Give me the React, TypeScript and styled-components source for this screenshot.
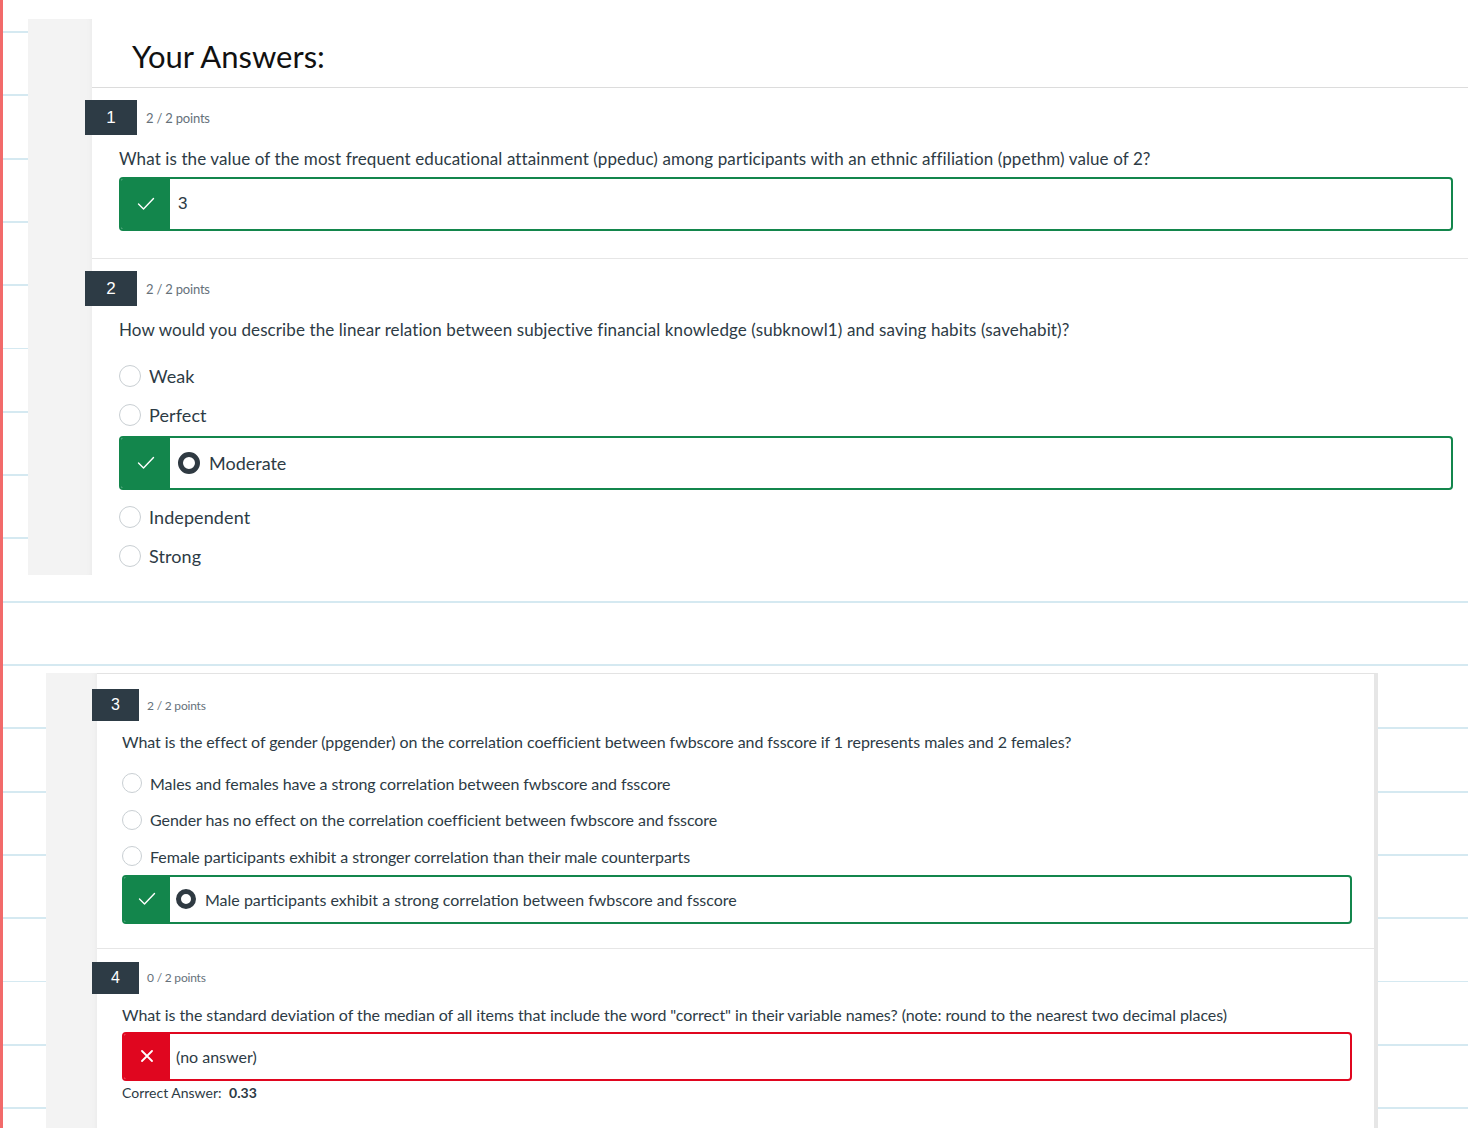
import React from "react";
import styled, { createGlobalStyle, css, ThemeProvider } from "styled-components";

interface Dims {
  sideW: number;
  padL: number;
  padR: number;
  secTop: number;
  secBottom: number;
  badgeW: number;
  badgeH: number;
  badgeShift: number;
  badgeFont: number;
  pointsFont: number;
  pointsGap: number;
  questionFont: number;
  questionLh: number;
  questionTop: number;
  questionTrack: number;
  boxTop: number;
  boxH: number;
  statusW: number;
  boxFont: number;
  innerGap: number;
  optionsTop: number;
  optionFont: number;
  optionRow: number;
  radio: number;
  radioGap: number;
  ring: number;
  pickedMargin: string;
}

declare module "styled-components" {
  export interface DefaultTheme extends Dims {}
}

// first screenshot is a bit larger than the second one
const large: Dims = {
  sideW: 64,
  padL: 27,
  padR: 15,
  secTop: 12,
  secBottom: 27,
  badgeW: 52,
  badgeH: 35,
  badgeShift: 34,
  badgeFont: 17,
  pointsFont: 13,
  pointsGap: 9,
  questionFont: 17,
  questionLh: 24,
  questionTop: 12,
  questionTrack: 0.1,
  boxTop: 6,
  boxH: 54,
  statusW: 51,
  boxFont: 17,
  innerGap: 8,
  optionsTop: 14,
  optionFont: 18,
  optionRow: 39,
  radio: 22,
  radioGap: 8,
  ring: 5,
  pickedMargin: "2px 0 7px",
};

const compact: Dims = {
  sideW: 51,
  padL: 25,
  padR: 22,
  secTop: 13,
  secBottom: 24,
  badgeW: 47,
  badgeH: 32,
  badgeShift: 30,
  badgeFont: 16,
  pointsFont: 12,
  pointsGap: 8,
  questionFont: 16,
  questionLh: 22,
  questionTop: 10,
  questionTrack: -0.07,
  boxTop: 6,
  boxH: 49,
  statusW: 48,
  boxFont: 16,
  innerGap: 6,
  optionsTop: 12,
  optionFont: 16,
  optionRow: 36.5,
  radio: 20,
  radioGap: 8,
  ring: 5,
  pickedMargin: "0",
};

const GREEN = "#13864c";
const RED = "#e0061f";
const INK = "#2d3b45";

const GlobalStyle = createGlobalStyle`
  html, body {
    margin: 0;
    padding: 0;
  }
  body {
    font-family: Lato, "Noto Sans", sans-serif;
    color: ${INK};
    background: #fff;
  }
  * {
    box-sizing: border-box;
  }
`;

const Page = styled.div`
  height: 100vh;
  overflow: hidden;
  display: flex;
  flex-direction: column;
  border-left: 3px solid #f26a6a;
  background-color: #fff;
  background-image: repeating-linear-gradient(
    to bottom,
    transparent 0px,
    transparent 31px,
    #d5e9f1 31px,
    #d5e9f1 33px,
    transparent 33px,
    transparent 63.3px
  );
`;

const Sheet = styled.div<{ $top: number; $left: number; $width?: number }>`
  display: flex;
  flex-shrink: 0;
  margin: ${(p) => p.$top}px 0 0 ${(p) => p.$left}px;
  width: ${(p) => (p.$width ? `${p.$width}px` : "auto")};
`;

const Sidebar = styled.div`
  width: ${({ theme }) => theme.sideW}px;
  flex-shrink: 0;
  background: #f3f3f3;
  box-shadow: inset -5px 0 6px -5px rgba(0, 0, 0, 0.05);
`;

const Main = styled.div<{ $framed?: boolean }>`
  flex: 1;
  min-width: 0;
  background: #fff;
  ${(p) =>
    p.$framed &&
    css`
      padding-top: 2px;
      border-top: 1px solid #e3e3e3;
      border-right: 4px solid #e6e6e6;
    `}
`;

const Header = styled.div`
  height: 69px;
  padding: 17px 0 0 40px;
  border-bottom: 1px solid #dcdcdc;
`;

const Heading = styled.h1`
  margin: 0;
  font-family: Lato, sans-serif;
  font-size: 31px;
  line-height: 40px;
  font-weight: 400;
  color: #111;
`;

const Section = styled.section<{ $last?: boolean }>`
  padding: ${({ theme }) => theme.secTop}px ${({ theme }) => theme.padR}px
    ${(p) => (p.$last ? 0 : p.theme.secBottom)}px ${({ theme }) => theme.padL}px;
  border-bottom: ${(p) => (p.$last ? "none" : "1px solid #e6e6e6")};
`;

const QuestionHead = styled.div`
  display: flex;
  align-items: center;
  height: ${({ theme }) => theme.badgeH}px;
`;

const Badge = styled.div`
  display: flex;
  align-items: center;
  justify-content: center;
  width: ${({ theme }) => theme.badgeW}px;
  height: ${({ theme }) => theme.badgeH}px;
  margin-left: -${({ theme }) => theme.badgeShift}px;
  background: ${INK};
  color: #fff;
  font-family: "Liberation Sans", Arial, sans-serif;
  font-size: ${({ theme }) => theme.badgeFont}px;
`;

const Points = styled.span`
  margin-left: ${({ theme }) => theme.pointsGap}px;
  font-size: ${({ theme }) => theme.pointsFont}px;
  letter-spacing: -0.2px;
  color: #66717a;
`;

const QuestionText = styled.p`
  margin: ${({ theme }) => theme.questionTop}px 0 0;
  font-size: ${({ theme }) => theme.questionFont}px;
  line-height: ${({ theme }) => theme.questionLh}px;
  letter-spacing: ${({ theme }) => theme.questionTrack}px;
  color: ${INK};
`;

const AnswerBox = styled.div<{ $tone: "correct" | "wrong"; $inList?: boolean }>`
  display: flex;
  align-items: stretch;
  height: ${({ theme }) => theme.boxH}px;
  margin: ${(p) => (p.$inList ? p.theme.pickedMargin : `${p.theme.boxTop}px 0 0`)};
  border: 2px solid ${(p) => (p.$tone === "correct" ? GREEN : RED)};
  border-radius: 4px;
  overflow: hidden;
  background: #fff;
`;

const Status = styled.div<{ $tone: "correct" | "wrong" }>`
  display: flex;
  align-items: center;
  justify-content: center;
  width: ${({ theme }) => theme.statusW - 2}px;
  flex-shrink: 0;
  background: ${(p) => (p.$tone === "correct" ? GREEN : RED)};
`;

const AnswerValue = styled.div<{ $plain?: boolean }>`
  display: flex;
  align-items: center;
  gap: ${({ theme }) => theme.radioGap + 1}px;
  padding-left: ${({ theme }) => theme.innerGap}px;
  font-family: ${(p) => (p.$plain ? '"Liberation Sans", Arial, sans-serif' : "Lato, sans-serif")};
  font-size: ${(p) => (p.$plain ? p.theme.boxFont : p.theme.optionFont)}px;
  color: ${INK};
`;

const Options = styled.div`
  margin-top: ${({ theme }) => theme.optionsTop}px;
`;

const OptionRow = styled.div`
  display: flex;
  align-items: center;
  gap: ${({ theme }) => theme.radioGap}px;
  height: ${({ theme }) => theme.optionRow}px;
  font-size: ${({ theme }) => theme.optionFont}px;
  letter-spacing: ${({ theme }) => theme.questionTrack}px;
  color: ${INK};
`;

const Radio = styled.span<{ $picked?: boolean }>`
  display: inline-block;
  flex-shrink: 0;
  width: ${({ theme }) => theme.radio}px;
  height: ${({ theme }) => theme.radio}px;
  border-radius: 50%;
  background: #fff;
  border: ${(p) => (p.$picked ? `${p.theme.ring}px solid #2f3a42` : "1px solid #c9cfd3")};
`;

const CorrectLine = styled.div`
  margin-top: 2px;
  padding-bottom: 40px;
  font-size: 14px;
  line-height: 20px;
  color: ${INK};

  strong {
    margin-left: 4px;
    font-weight: 700;
  }
`;

const CheckIcon = () => (
  <svg width="18" height="14" viewBox="0 0 18 14" fill="none">
    <polyline points="1.5,7 6.5,12 16.5,1.5" stroke="#fff" strokeWidth="1.4" strokeLinecap="round" strokeLinejoin="round" />
  </svg>
);

const CrossIcon = () => (
  <svg width="12" height="12" viewBox="0 0 12 12" fill="none">
    <path d="M1 1 L11 11 M11 1 L1 11" stroke="#fff" strokeWidth="1.8" strokeLinecap="round" />
  </svg>
);

interface QuestionProps {
  num: number;
  points: string;
  text: string;
  last?: boolean;
  children?: React.ReactNode;
}

const Question = ({ num, points, text, last, children }: QuestionProps) => (
  <Section $last={last}>
    <QuestionHead>
      <Badge>{num}</Badge>
      <Points>{points}</Points>
    </QuestionHead>
    <QuestionText>{text}</QuestionText>
    {children}
  </Section>
);

const Choices = ({ items, picked }: { items: string[]; picked: string }) => (
  <Options>
    {items.map((label) =>
      label === picked ? (
        <AnswerBox key={label} $tone="correct" $inList>
          <Status $tone="correct">
            <CheckIcon />
          </Status>
          <AnswerValue>
            <Radio $picked />
            {label}
          </AnswerValue>
        </AnswerBox>
      ) : (
        <OptionRow key={label}>
          <Radio />
          {label}
        </OptionRow>
      )
    )}
  </Options>
);

const App = () => {
  return (
    <>
      <GlobalStyle />
      <Page>
        <ThemeProvider theme={large}>
          <Sheet $top={19} $left={25}>
            <Sidebar />
            <Main>
              <Header>
                <Heading>Your Answers:</Heading>
              </Header>
              <Question
                num={1}
                points="2 / 2 points"
                text="What is the value of the most frequent educational attainment (ppeduc) among participants with an ethnic affiliation (ppethm) value of 2?"
              >
                <AnswerBox $tone="correct">
                  <Status $tone="correct">
                    <CheckIcon />
                  </Status>
                  <AnswerValue $plain>3</AnswerValue>
                </AnswerBox>
              </Question>
              <Question
                num={2}
                points="2 / 2 points"
                text="How would you describe the linear relation between subjective financial knowledge (subknowl1) and saving habits (savehabit)?"
                last
              >
                <Choices items={["Weak", "Perfect", "Moderate", "Independent", "Strong"]} picked="Moderate" />
              </Question>
            </Main>
          </Sheet>
        </ThemeProvider>

        <ThemeProvider theme={compact}>
          <Sheet $top={98} $left={43} $width={1332}>
            <Sidebar />
            <Main $framed>
              <Question
                num={3}
                points="2 / 2 points"
                text="What is the effect of gender (ppgender) on the correlation coefficient between fwbscore and fsscore if 1 represents males and 2 females?"
              >
                <Choices
                  items={[
                    "Males and females have a strong correlation between fwbscore and fsscore",
                    "Gender has no effect on the correlation coefficient between fwbscore and fsscore",
                    "Female participants exhibit a stronger correlation than their male counterparts",
                    "Male participants exhibit a strong correlation between fwbscore and fsscore",
                  ]}
                  picked="Male participants exhibit a strong correlation between fwbscore and fsscore"
                />
              </Question>
              <Question
                num={4}
                points="0 / 2 points"
                text={'What is the standard deviation of the median of all items that include the word "correct" in their variable names? (note: round to the nearest two decimal places)'}
                last
              >
                <AnswerBox $tone="wrong">
                  <Status $tone="wrong">
                    <CrossIcon />
                  </Status>
                  <AnswerValue>(no answer)</AnswerValue>
                </AnswerBox>
                <CorrectLine>
                  Correct Answer: <strong>0.33</strong>
                </CorrectLine>
              </Question>
            </Main>
          </Sheet>
        </ThemeProvider>
      </Page>
    </>
  );
};

export default App;
